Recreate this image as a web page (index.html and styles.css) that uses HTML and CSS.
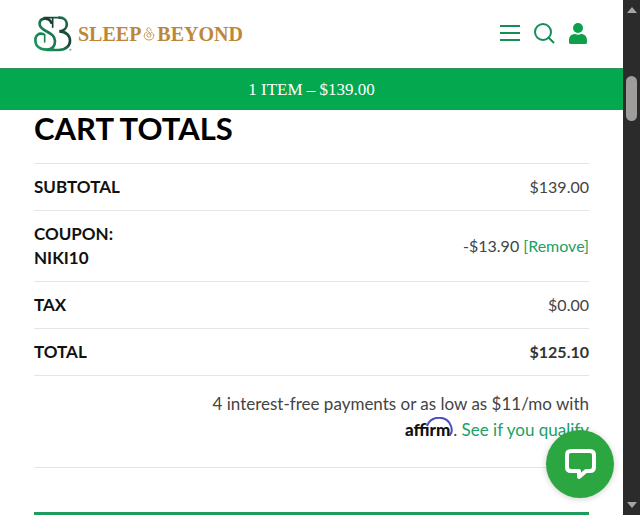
FILE: index.html
```html
<!DOCTYPE html>
<html lang="en">
<head>
    <meta charset="UTF-8">
    <meta name="viewport" content="width=device-width, initial-scale=1">
    <title>Cart - Sleep &amp; Beyond</title>
    <link rel="stylesheet" href="styles.css">
</head>
<body>
<div class="window">
    <div class="page">
        <header class="header">
            <a href="#" class="logo">
                <svg class="logo-mark" viewBox="0 0 114 108" fill="none" stroke-linecap="round" aria-hidden="true">
                    <defs>
                        <linearGradient id="mark" gradientUnits="userSpaceOnUse" x1="0" y1="100" x2="114" y2="0">
                            <stop offset="0" stop-color="#1c9a62"/>
                            <stop offset=".45" stop-color="#17784f"/>
                            <stop offset=".6" stop-color="#173f32"/>
                            <stop offset="1" stop-color="#1c8a5a"/>
                        </linearGradient>
                    </defs>
                    <g stroke="url(#mark)">
                        <path stroke-width="8" d="M52 20C44 2 16 4 17 25C19 48 63 46 63 75C63 92 54 101 38 101C17 101 4 90 4 72C4 58 15 50 27 54"/>
                        <path stroke-width="5" d="M32 55V78M30 5H78M56 6V34"/>
                        <path stroke-width="8" d="M76 5C106 5 106 43 76 46C118 46 120 102 74 102H38"/>
                    </g>
                    <circle cx="109" cy="101" r="3" fill="#69a889"/>
                </svg>
                <span class="logo-text">SLEEP</span>
                <svg class="logo-amp" viewBox="0 0 12 16" fill="none" stroke="#c99a56" aria-hidden="true">
                    <path d="M8 5C8 1 3 1 4 4C4 6 8 6 8 9C8 12 4 12 4 9C4 7 7 7 7 9M4 6C0 7 0 14 6 14C12 14 12 7 8 6"/>
                </svg>
                <span class="logo-text">BEYOND</span>
            </a>
            <nav class="tools">
                <button class="tool" aria-label="Menu">
                    <svg viewBox="0 0 22 22" fill="none" stroke="#168d55" stroke-width="2"><path d="M1 3H21M1 10H21M1 17H21"/></svg>
                </button>
                <button class="tool" aria-label="Search">
                    <svg viewBox="0 0 22 22" fill="none" stroke="#168d55" stroke-width="2"><circle cx="10" cy="9" r="8"/><path d="M15 14L21 20"/></svg>
                </button>
                <button class="tool" aria-label="Account">
                    <svg viewBox="0 0 22 22" fill="#0da04b"><circle cx="11" cy="5" r="5"/><path d="M2 20V17C2 13 5 11 8 11C10 12 12 12 14 11C17 11 20 13 20 17V20Q20 21 18 21H4Q2 21 2 20Z"/></svg>
                </button>
            </nav>
        </header>

        <div class="cart-bar">1 ITEM – $139.00</div>

        <main class="totals">
            <h2>CART TOTALS</h2>
            <table>
                <tr>
                    <th scope="row">SUBTOTAL</th>
                    <td>$139.00</td>
                </tr>
                <tr>
                    <th scope="row">COUPON:<br>NIKI10</th>
                    <td>-$13.90 <a href="#">[Remove]</a></td>
                </tr>
                <tr>
                    <th scope="row">TAX</th>
                    <td>$0.00</td>
                </tr>
                <tr>
                    <th scope="row">TOTAL</th>
                    <td><strong>$125.10</strong></td>
                </tr>
            </table>
            <p class="affirm">4 interest-free payments or as low as $11/mo with<br>
                <span class="affirm-logo">affirm<svg viewBox="0 0 28 20" fill="none" stroke="#4a4fc0" stroke-width="2" aria-hidden="true"><path d="M2 9C6 -2 22 -2 26 9Q28 15 25 18H24"/></svg></span>. <a href="#">See if you qualify</a>
            </p>
            <button class="checkout" aria-label="Proceed to checkout"></button>
        </main>

        <button class="chat" aria-label="Open chat">
            <svg viewBox="0 0 34 34" fill="none" stroke="#fff" stroke-width="4" stroke-linejoin="round">
                <path d="M8 4H27Q31 4 31 8V20Q31 24 27 24H23L16 30V24H8Q4 24 4 20V8Q4 4 8 4Z"/>
            </svg>
        </button>
    </div>

    <div class="scroll" aria-hidden="true">
        <span class="arrow up"></span>
        <span class="thumb"></span>
        <span class="arrow down"></span>
    </div>
</div>
</body>
</html>
```
FILE: styles.css
```css
*{
    box-sizing: border-box;
    margin: 0;
    padding: 0;
}
body{
    font: 17px/24px Lato, "Liberation Sans", sans-serif;
    color: #444;
    background: #fff;
}
button{
    border: 0;
    background: none;
    cursor: pointer;
}
a{
    color: #20a064;
    text-decoration: none;
}
.window{
    display: flex;
    height: 100vh;
    overflow: hidden;
}
.page{
    flex: 1;
    position: relative;
    overflow: hidden;
}

/* header */
.header{
    display: flex;
    align-items: center;
    justify-content: space-between;
    height: 68px;
    padding: 0 34px;
}
.logo{
    display: flex;
    align-items: center;
}
.logo-mark{
    width: 38px;
    height: 36px;
    margin-right: 6px;
}
.logo-text{
    font: bold 20px/24px "Liberation Serif", serif;
    color: #bd8739;
}
.logo-amp{
    width: 12px;
    height: 16px;
    margin: 0 2px;
}
.tools{
    display: flex;
    gap: 12px;
}
.tool{
    width: 22px;
    height: 22px;
}
.tool svg{
    display: block;
}
.cart-bar{
    height: 42px;
    border-top: 1px solid #269456;
    background: #04a84f;
    font: 17px/41px "Liberation Serif", serif;
    color: #fff;
    text-align: center;
}

/* totals */
.totals{
    padding: 0 34px;
}
.totals h2{
    padding-bottom: 17px;
    font-size: 31px;
    line-height: 36px;
    color: #000;
}
.totals table{
    width: 100%;
    border-collapse: separate;
    border-spacing: 0;
}
.totals th,
.totals td{
    padding: 11px 0;
    border-top: 1px solid #e5e5e5;
}
.totals th{
    color: #111;
    text-align: left;
}
.totals td{
    font-size: 16px;
    text-align: right;
}
.totals strong{
    color: #333;
}
.affirm{
    padding: 15px 0 24px;
    border-top: 1px solid #e5e5e5;
    border-bottom: 1px solid #e5e5e5;
    line-height: 26px;
    text-align: right;
}
.affirm-logo{
    position: relative;
    padding-right: 3px;
    font-weight: 900;
    color: #111;
}
.affirm-logo svg{
    position: absolute;
    right: 0;
    bottom: 3px;
    width: 28px;
    height: 20px;
}
.checkout{
    display: block;
    width: 100%;
    height: 48px;
    margin-top: 44px;
    background: #1f9c5c;
}
.chat{
    position: absolute;
    right: 9px;
    bottom: 17px;
    display: flex;
    align-items: center;
    justify-content: center;
    width: 68px;
    height: 68px;
    border-radius: 50%;
    background: #2ba640;
    box-shadow: 0 1px 6px rgba(0,0,0,0.2);
}
.chat svg{
    width: 34px;
    height: 34px;
}

/* scrollbar */
.scroll{
    display: flex;
    flex-direction: column;
    align-items: center;
    width: 17px;
    padding: 7px 0;
    background: #2b2b2b;
}
.arrow{
    border: 5px solid transparent;
}
.up{
    border-top: 0;
    border-bottom: 6px solid #a5a5a5;
}
.down{
    margin-top: auto;
    border-bottom: 0;
    border-top: 6px solid #a5a5a5;
}
.thumb{
    width: 11px;
    height: 45px;
    margin-top: 63px;
    border-radius: 6px;
    background: #9f9c9c;
}
```
